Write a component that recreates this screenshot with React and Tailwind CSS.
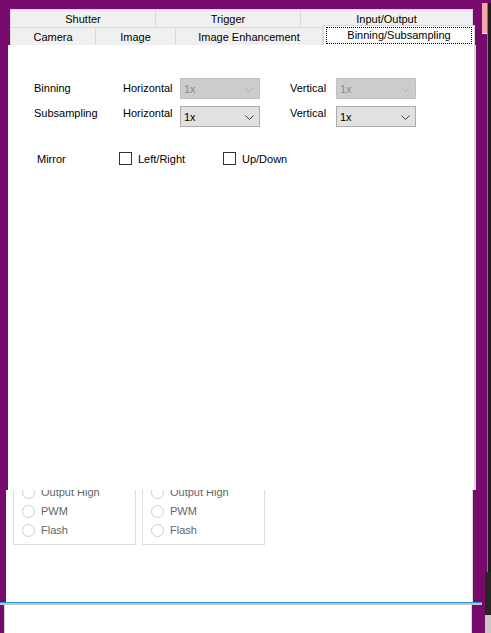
import React from "react";

const FONT = { fontFamily: '"Liberation Sans", Arial, sans-serif' };

const Chevron = ({ color }) => (
  <svg width="9" height="5" viewBox="0 0 9 5" fill="none">
    <path d="M0.5 0.5 L4.5 4.5 L8.5 0.5" stroke={color} strokeWidth="1" />
  </svg>
);

const Combo = ({ disabled }) => (
  <div
    className={
      disabled
        ? "w-[80px] h-[21px] flex items-center justify-between pl-[3px] pr-[5px] pt-[1px] border border-[#bfbfbf] bg-[#cccccc] text-[#8a8a8a]"
        : "w-[80px] h-[21px] flex items-center justify-between pl-[3px] pr-[5px] pt-[1px] border border-[#adadad] bg-[#e1e1e1] text-black"
    }
  >
    <span>1x</span>
    <Chevron color={disabled ? "#b4b4b4" : "#404040"} />
  </div>
);

const Checkbox = ({ label, width }) => (
  <div className="flex items-center" style={width ? { width } : undefined}>
    <div className="w-[13px] h-[13px] border border-[#333333] bg-white" />
    <span className="ml-[6px] leading-[16px]">{label}</span>
  </div>
);

const Radio = ({ label }) => (
  <div className="h-[19px] flex items-center pl-[8px]">
    <div className="w-[13px] h-[13px] rounded-full border border-[#cfcfcf] bg-white" />
    <span className="ml-[6px] text-[#666666]">{label}</span>
  </div>
);

// only the lower part of these boxes shows through the broken page
const GroupBox = () => (
  <div className="w-[123px] border-l border-r border-b border-[#dcdcdc] pb-[4px]">
    <Radio label="Output High" />
    <Radio label="PWM" />
    <Radio label="Flash" />
  </div>
);

const topTabs = [
  { label: "Shutter", w: "w-[146px]" },
  { label: "Trigger", w: "w-[145px]" },
  { label: "Input/Output", w: "w-[172px]" },
];

const bottomTabs = [
  { label: "Camera", w: "w-[86px]" },
  { label: "Image", w: "w-[80px]" },
  { label: "Image Enhancement", w: "w-[147px]" },
];

export default function App() {
  return (
    <div className="w-[491px] h-[633px] bg-[#780a6e] flex overflow-hidden text-[11px] text-black" style={FONT}>
      {/* main window column */}
      <div className="w-[482px] shrink-0 flex flex-col">
        <div className="h-[9px]" />

        {/* tab strip */}
        <div className="ml-[10px] flex h-[18px]">
          {topTabs.map((t, i) => (
            <div
              key={t.label}
              className={`${t.w} h-[18px] bg-[#f0f0f0] border-t border-r border-[#d9d9d9] ${i === 0 ? "border-l" : ""} flex items-center justify-center pt-[1px]`}
            >
              {t.label}
            </div>
          ))}
        </div>
        <div className="ml-[10px] flex h-[18px] items-end">
          {bottomTabs.map((t, i) => (
            <div
              key={t.label}
              className={`${t.w} h-[18px] bg-[#f0f0f0] border-t border-r border-[#d9d9d9] ${i === 0 ? "border-l" : ""} flex items-center justify-center pt-[1px]`}
            >
              {t.label}
            </div>
          ))}
          <div className="w-[152px] h-[20px] bg-white border-t border-r border-l border-[#d9d9d9] px-[2px] pt-[1px] pb-[1px]">
            <div className="h-full border border-dotted border-black flex items-center justify-center">
              Binning/Subsampling
            </div>
          </div>
        </div>

        {/* active tab page */}
        <div className="ml-[8px] w-[468px] h-[445px] bg-white border-r-2 border-[#dadada] pt-[33px] pl-[26px]">
          <div className="flex items-center h-[21px]">
            <span className="w-[89px]">Binning</span>
            <span className="w-[57px]">Horizontal</span>
            <Combo disabled />
            <span className="w-[30px]" />
            <span className="w-[46px]">Vertical</span>
            <Combo disabled />
          </div>
          <div className="flex items-start h-[22px] mt-[6px]">
            <span className="w-[89px] leading-[16px]">Subsampling</span>
            <span className="w-[57px] leading-[16px]">Horizontal</span>
            <div className="mt-[1px]">
              <Combo />
            </div>
            <span className="w-[30px]" />
            <span className="w-[46px] leading-[16px]">Vertical</span>
            <div className="mt-[1px]">
              <Combo />
            </div>
          </div>
          <div className="flex items-center h-[13px] mt-[25px]">
            <span className="ml-[3px] w-[82px] leading-[16px]">Mirror</span>
            <Checkbox label="Left/Right" width="104px" />
            <Checkbox label="Up/Down" />
          </div>
        </div>

        {/* page behind, bleeding through */}
        <div className="ml-[6px] w-[467px] h-[112px] bg-white border-r border-[#d9d9d9] overflow-hidden flex items-end gap-[6px] pl-[7px] pb-[57px]">
          <GroupBox />
          <GroupBox />
        </div>

        <div className="h-[1px] bg-[#2a8ce0]" />
        <div className="h-[2px] bg-[#c4c4c4]" />

        <div className="ml-[4px] w-[468px] flex-1 bg-white border-l border-r border-[#d9d9d9]" />
      </div>

      {/* neighbouring window edge */}
      <div className="w-[9px] shrink-0 flex flex-col">
        <div className="flex h-[572px]">
          <div className="w-[5px] pt-[3px]">
            <div className="h-[31px] bg-[#f4a7a9] border-b border-white" />
          </div>
          <div className="w-[4px] mt-[3px] border-l border-[#2a8ce0] bg-[#1e1e1e]" />
        </div>
        <div className="ml-[3px] h-[43px] bg-[#262626]" />
        <div className="ml-[3px] flex-1 bg-[#c8c8c8]" />
      </div>
    </div>
  );
}
